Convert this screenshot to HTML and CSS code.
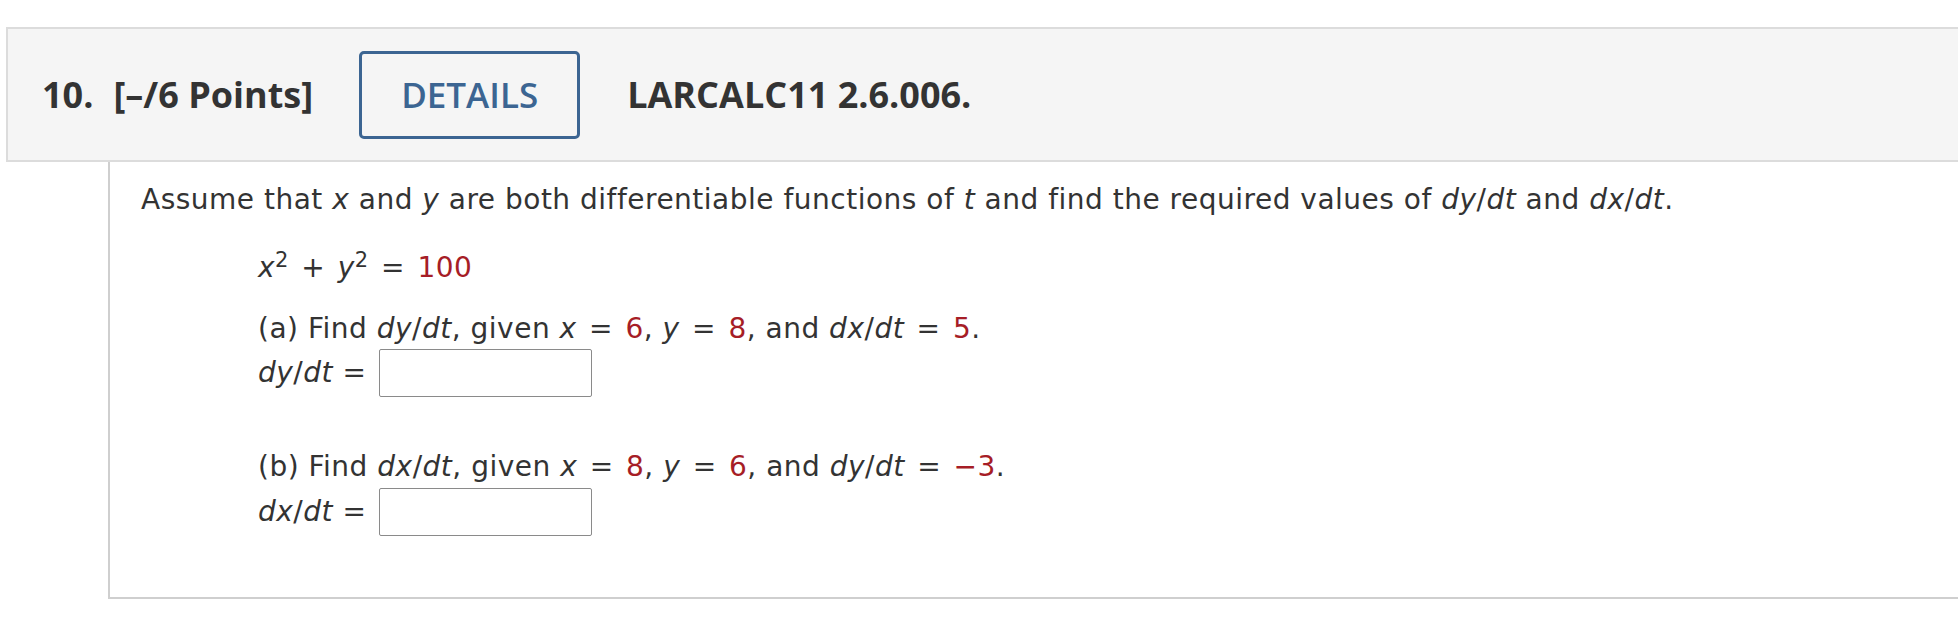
FILE: index.html
```html
<!DOCTYPE html>
<html lang="en">
<head>
<meta charset="utf-8">
<title>LARCALC11 2.6.006.</title>
<link rel="stylesheet" href="styles.css">
</head>
<body>
<div class="page">
  <div class="question">
    <div class="qhead">
      <span class="qnum">10.</span>
      <span class="qpts">[–/6 Points]</span>
      <button class="details" type="button">DETAILS</button>
      <span class="qref">LARCALC11 2.6.006.</span>
    </div>
    <div class="qbody">
      <p class="intro">Assume that <i>x</i> and <i>y</i> are both differentiable functions of <i>t</i> and find the required values of <i>dy</i>/<i>dt</i> and <i>dx</i>/<i>dt</i>.</p>
      <div class="indent">
        <p class="eq"><i>x</i><sup>2</sup> <span class="op">+</span> <i>y</i><sup>2</sup> <span class="op">=</span> <span class="red">100</span></p>
        <p class="part part-a">(a) Find <i>dy</i>/<i>dt</i>, given <i>x</i> <span class="op">=</span> <span class="red">6</span>, <i>y</i> <span class="op">=</span> <span class="red">8</span>, and <i>dx</i>/<i>dt</i> <span class="op">=</span> <span class="red">5</span>.</p>
        <div class="answer">
          <span class="label"><i>dy</i>/<i>dt</i> =</span>
          <input class="box" type="text" aria-label="dy/dt">
        </div>
        <p class="part part-b">(b) Find <i>dx</i>/<i>dt</i>, given <i>x</i> <span class="op">=</span> <span class="red">8</span>, <i>y</i> <span class="op">=</span> <span class="red">6</span>, and <i>dy</i>/<i>dt</i> <span class="op">=</span> <span class="red">−3</span>.</p>
        <div class="answer answer-b">
          <span class="label"><i>dx</i>/<i>dt</i> =</span>
          <input class="box" type="text" aria-label="dx/dt">
        </div>
      </div>
    </div>
  </div>
</div>
</body>
</html>
```

FILE: styles.css
```css
html, body {
  margin: 0;
  padding: 0;
  background: #ffffff;
  overflow: hidden;
}

.page {
  padding: 27px 0 0 6px;
  width: 2000px;
}

.question {
  width: 1990px;
}

.qhead {
  display: flex;
  align-items: center;
  height: 131px;
  box-sizing: content-box;
  background: #f5f5f5;
  border: 2px solid #dcdcdc;
  border-right: none;
  padding-left: 34px;
  font-family: "Open Sans", "DejaVu Sans", sans-serif;
  font-weight: 700;
  font-size: 36px;
  color: #333333;
}

.qpts {
  margin-left: 20px;
}

.details {
  margin-left: 46px;
  width: 221px;
  height: 88px;
  box-sizing: border-box;
  border: 3px solid #3c6592;
  border-radius: 5px;
  background: transparent;
  font-family: "Open Sans", "DejaVu Sans", sans-serif;
  font-weight: 600;
  font-size: 35px;
  color: #3c6592;
  padding: 0;
}

.qref {
  margin-left: 47px;
}

.qbody {
  margin-left: 102px;
  border-left: 2px solid #cfcfcf;
  border-bottom: 2px solid #cfcfcf;
  padding: 21px 0 61px 31px;
  font-family: "DejaVu Sans", Verdana, sans-serif;
  font-size: 28px;
  letter-spacing: 0.5px;
  line-height: 34px;
  color: #333333;
}

.intro,
.eq {
  margin: 0;
}

.red {
  color: #a61d26;
}

.op {
  margin: 0 3px;
}

sup {
  font-size: 21px;
  line-height: 0;
  vertical-align: 10px;
}

.indent {
  margin-left: 117px;
  margin-top: 34px;
}

.part {
  margin: 0;
}

.part-a {
  margin-top: 27px;
}

.answer {
  display: flex;
  align-items: center;
  gap: 13px;
  height: 48px;
  margin-top: 3px;
}

.box {
  width: 213px;
  height: 48px;
  box-sizing: border-box;
  border: 1px solid #8a8a8a;
  border-radius: 2px;
  background: #ffffff;
  margin: 0;
  padding: 0;
}

.part-b {
  margin-top: 53px;
}

.answer-b {
  margin-top: 4px;
}
```
